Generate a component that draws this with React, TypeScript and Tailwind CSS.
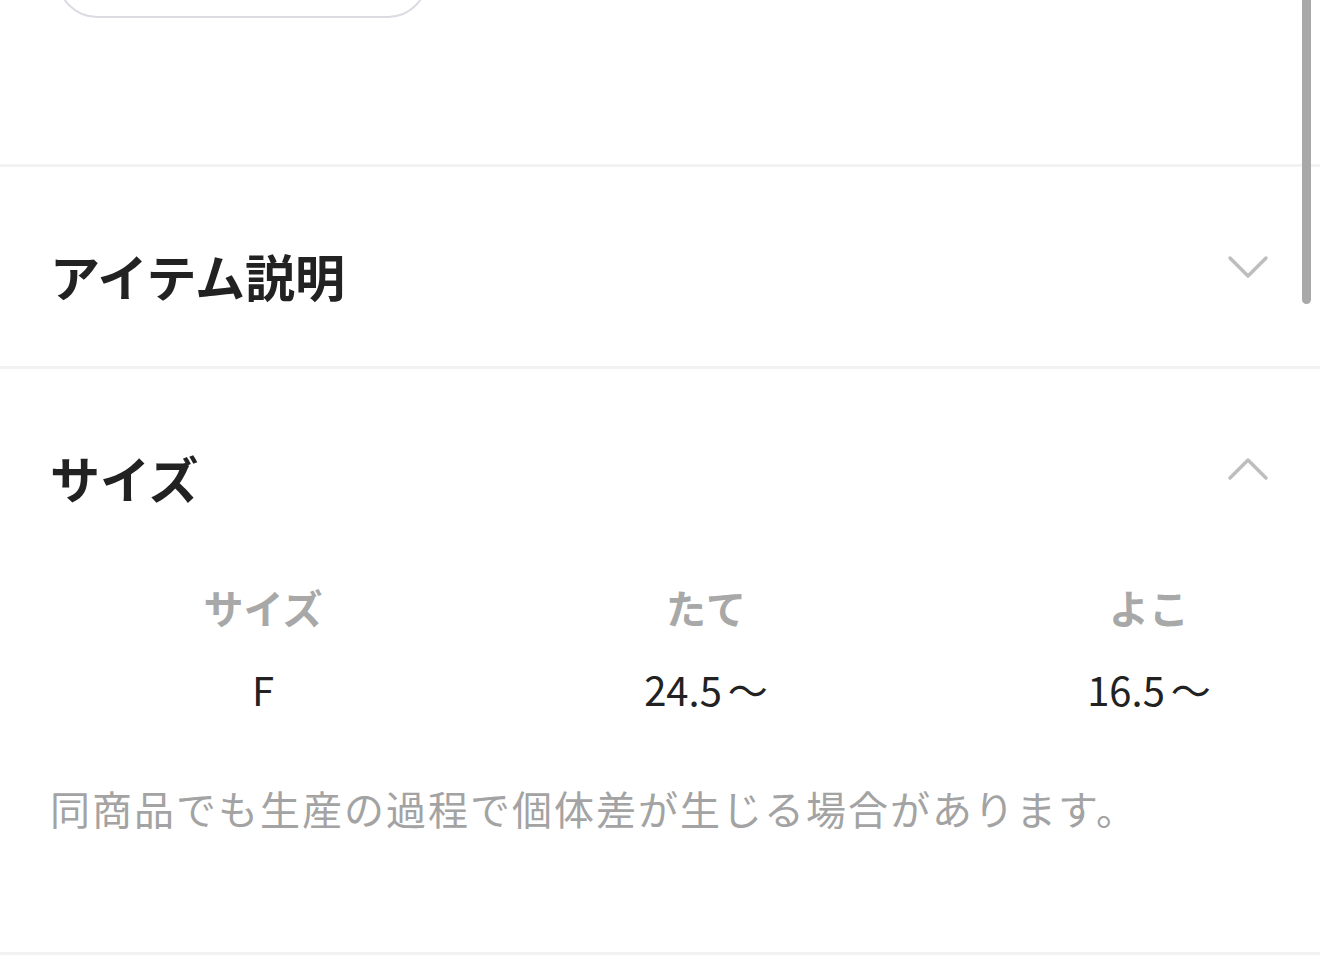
import React from "react";

const Chevron = ({ up }: { up?: boolean }) => (
  <svg width="42" height="26" viewBox="0 0 42 26" fill="none" className="shrink-0">
    <polyline
      points={up ? "3,22 21,4 39,22" : "3,4 21,22 39,4"}
      stroke="#bdbdbd"
      strokeWidth="3.5"
      strokeLinecap="round"
      strokeLinejoin="round"
    />
  </svg>
);

const sizes = [
  { label: "サイズ", value: "F", range: false },
  { label: "たて", value: "24.5", range: true },
  { label: "よこ", value: "16.5", range: true },
];

export default function App() {
  return (
    <div className="relative w-[1320px] h-[955px] overflow-hidden bg-white font-['Noto_Sans_CJK_JP',sans-serif] text-[#222]">
      {/* bottom edge of a button from the section above */}
      <div className="flex h-[164px] flex-col pl-[57px]">
        <div className="-mt-[80px] h-[98px] w-[371px] shrink-0 rounded-[40px] border-2 border-[#dcdae2]" />
      </div>
      <div className="h-[3px] bg-[#f2f2f3]" />

      <div className="h-[199px] flex items-center justify-between pl-[50px] pr-[51px]">
        <h2 className="text-[50px] font-bold leading-none pt-[16px]">アイテム説明</h2>
        <Chevron />
      </div>
      <div className="h-[3px] bg-[#f2f2f3]" />

      <div className="h-[200px] flex items-center justify-between pl-[50px] pr-[51px]">
        <h2 className="text-[50px] font-bold leading-none pt-[16px]">サイズ</h2>
        <Chevron up />
      </div>

      <div className="grid grid-cols-[300px_300px_300px] gap-x-[143px] pl-[113px]">
        {sizes.map((s) => (
          <div key={s.label} className="flex h-[76px] items-center justify-center text-[40px] font-bold text-[#a8a8a8]">
            {s.label}
          </div>
        ))}
        {sizes.map((s) => (
          <div key={s.label + "-v"} className="flex h-[88px] items-center justify-center gap-[6px] text-[40px]">
            <span>{s.value}</span>
            {s.range && <span>～</span>}
          </div>
        ))}
      </div>

      <p className="mt-[55px] pl-[50px] text-[40px] leading-none tracking-[2px] text-[#a3a3a3]">
        同商品でも生産の過程で個体差が生じる場合があります。
      </p>

      <div className="absolute bottom-0 left-0 right-0 h-[3px] bg-[#f2f2f3]" />

      {/* overlay scrollbar */}
      <div className="absolute right-[9px] top-0 h-[304px] w-[9px] rounded-b-full bg-[#a8a8a8]" />
    </div>
  );
}
